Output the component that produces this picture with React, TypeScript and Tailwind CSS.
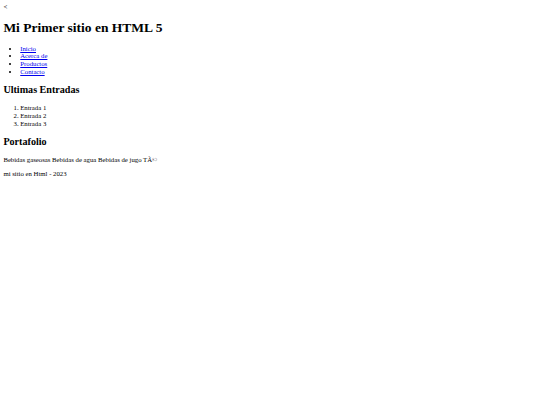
export default function App() {
  return (
    <div className="font-['Liberation_Serif','Times_New_Roman',serif] text-[6.75px] leading-[1.15] text-black bg-white p-[3.375px] min-h-[405px]">
      {"<"}
      <h1 className="text-[2em] font-bold my-[0.67em] leading-[1.15]">Mi Primer sitio en HTML 5</h1>
      <ul className="list-disc pl-[16.875px] my-[1em]">
        <li><a href="#" className="text-[#0000ee] underline">Inicio</a></li>
        <li><a href="#" className="text-[#0000ee] underline">Acerca de</a></li>
        <li><a href="#" className="text-[#0000ee] underline">Productos</a></li>
        <li><a href="#" className="text-[#0000ee] underline">Contacto</a></li>
      </ul>
      <h2 className="text-[1.5em] font-bold my-[0.83em] leading-[1.15]">Ultimas Entradas</h2>
      <ol className="list-decimal pl-[16.875px] my-[1em]">
        <li>Entrada 1</li>
        <li>Entrada 2</li>
        <li>Entrada 3</li>
      </ol>
      <h2 className="text-[1.5em] font-bold my-[0.83em] leading-[1.15]">Portafolio</h2>
      <p className="my-[1em]">Bebidas gaseosas Bebidas de agua Bebidas de jugo TÃ©</p>
      <p className="my-[1em]">mi sitio en Html - 2023</p>
    </div>
  );
}
